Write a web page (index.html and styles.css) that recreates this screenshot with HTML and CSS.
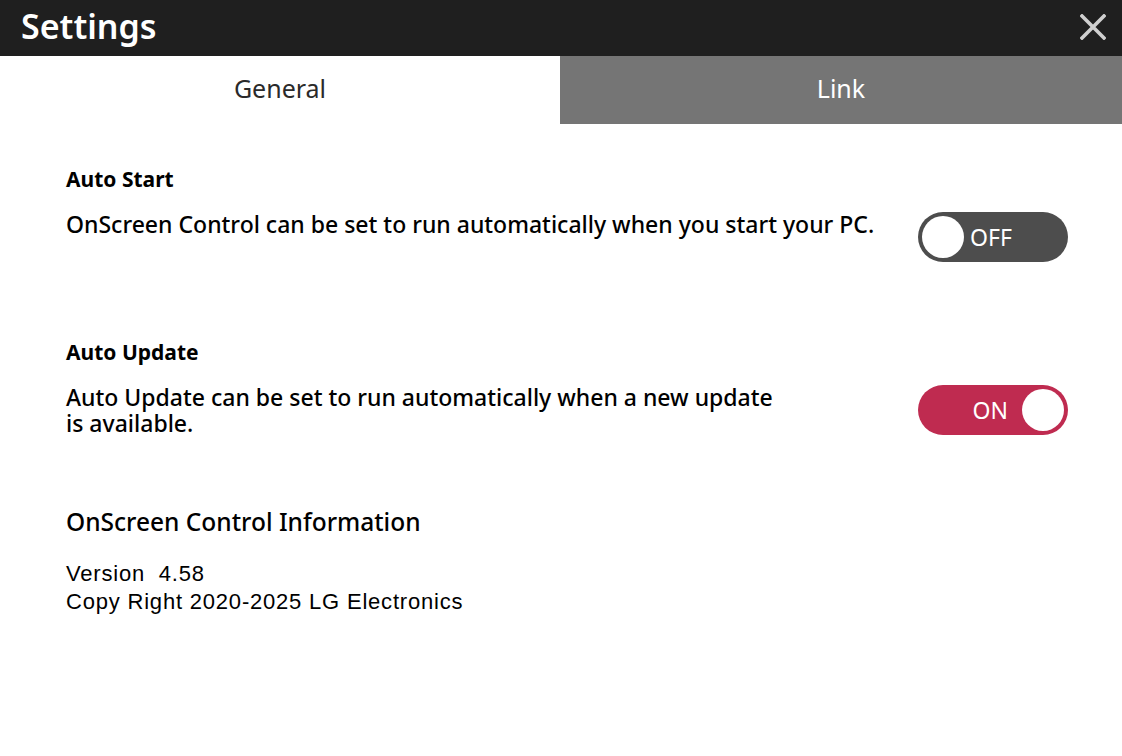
FILE: index.html
```html
<!DOCTYPE html>
<html lang="en">
<head>
<meta charset="utf-8">
<title>Settings</title>
<link rel="stylesheet" href="styles.css">
</head>
<body>
<div class="window">
  <header class="titlebar">
    <h1 class="title">Settings</h1>
    <button class="close" aria-label="Close">
      <svg width="26" height="26" viewBox="0 0 26 26"><path d="M2 2 L24 24 M24 2 L2 24" stroke="#cfcfcf" stroke-width="3.6" stroke-linecap="square"/></svg>
    </button>
  </header>
  <nav class="tabs">
    <div class="tab active">General</div>
    <div class="tab">Link</div>
  </nav>
  <main class="content">
    <section class="option">
      <h2 class="option-title">Auto Start</h2>
      <div class="option-row">
        <p class="option-desc">OnScreen Control can be set to run automatically when you start your PC.</p>
        <div class="toggle off"><span class="knob"></span><span class="label">OFF</span></div>
      </div>
    </section>
    <section class="option">
      <h2 class="option-title">Auto Update</h2>
      <div class="option-row">
        <p class="option-desc">Auto Update can be set to run automatically when a new update<br>is available.</p>
        <div class="toggle on"><span class="label">ON</span><span class="knob"></span></div>
      </div>
    </section>
    <section class="info">
      <h2 class="info-title">OnScreen Control Information</h2>
      <p class="info-line">Version&nbsp; 4.58</p>
      <p class="info-line">Copy Right 2020-2025 LG Electronics</p>
    </section>
  </main>
</div>
</body>
</html>
```

FILE: styles.css
```css
* { box-sizing: border-box; }

html, body {
  margin: 0;
  padding: 0;
  background: #ffffff;
}

body {
  font-family: "Noto Sans", "Open Sans", sans-serif;
  color: #000;
  width: 1122px;
  height: 756px;
  overflow: hidden;
}

.titlebar {
  height: 56px;
  background: #1f1f1f;
  display: flex;
  align-items: center;
  justify-content: space-between;
  padding: 0 16px 0 21px;
}

.title {
  margin: 0;
  color: #fff;
  font-size: 34px;
  font-weight: 600;
  line-height: 1;
  padding-bottom: 4px;
}

.close {
  background: none;
  border: 0;
  padding: 0;
  width: 26px;
  height: 26px;
  display: flex;
  margin-top: -2px;
}

.tabs {
  display: grid;
  grid-template-columns: 560px 1fr;
  height: 68px;
}

.tab {
  display: flex;
  align-items: center;
  justify-content: center;
  font-size: 25px;
  color: #fff;
  background: #757575;
  padding-bottom: 4px;
}

.tab.active {
  background: #fff;
  color: #2a2a2a;
}

.content {
  padding: 42px 54px 0 66px;
}

.option {
  margin-bottom: 77px;
}

.option + .option {
  margin-bottom: 71px;
}

.option-title {
  margin: 0 0 19px;
  font-size: 21px;
  font-weight: 700;
  line-height: 26px;
}

.option-row {
  display: flex;
  justify-content: space-between;
  align-items: flex-start;
}

.option-desc {
  margin: 0;
  font-size: 23px;
  font-weight: 500;
  line-height: 26px;
}

.toggle {
  flex: none;
  width: 150px;
  height: 50px;
  border-radius: 25px;
  display: flex;
  align-items: center;
  padding: 0 4px;
  margin-top: 1px;
  color: #fff;
  font-size: 23px;
}

.toggle.off { background: #4d4d4d; }
.toggle.on { background: #bf2b50; justify-content: flex-end; }

.knob {
  width: 42px;
  height: 42px;
  border-radius: 50%;
  background: #fff;
}

.toggle.off .label { margin-left: 6px; }
.toggle.on .label { margin-right: 14px; }

.info-title {
  margin: 0 0 23px;
  font-size: 24.5px;
  font-weight: 500;
  line-height: 30px;
}

.info-line {
  margin: 0;
  font-family: "Liberation Sans", Arial, sans-serif;
  font-size: 22px;
  letter-spacing: 0.8px;
  line-height: 28px;
}
```
